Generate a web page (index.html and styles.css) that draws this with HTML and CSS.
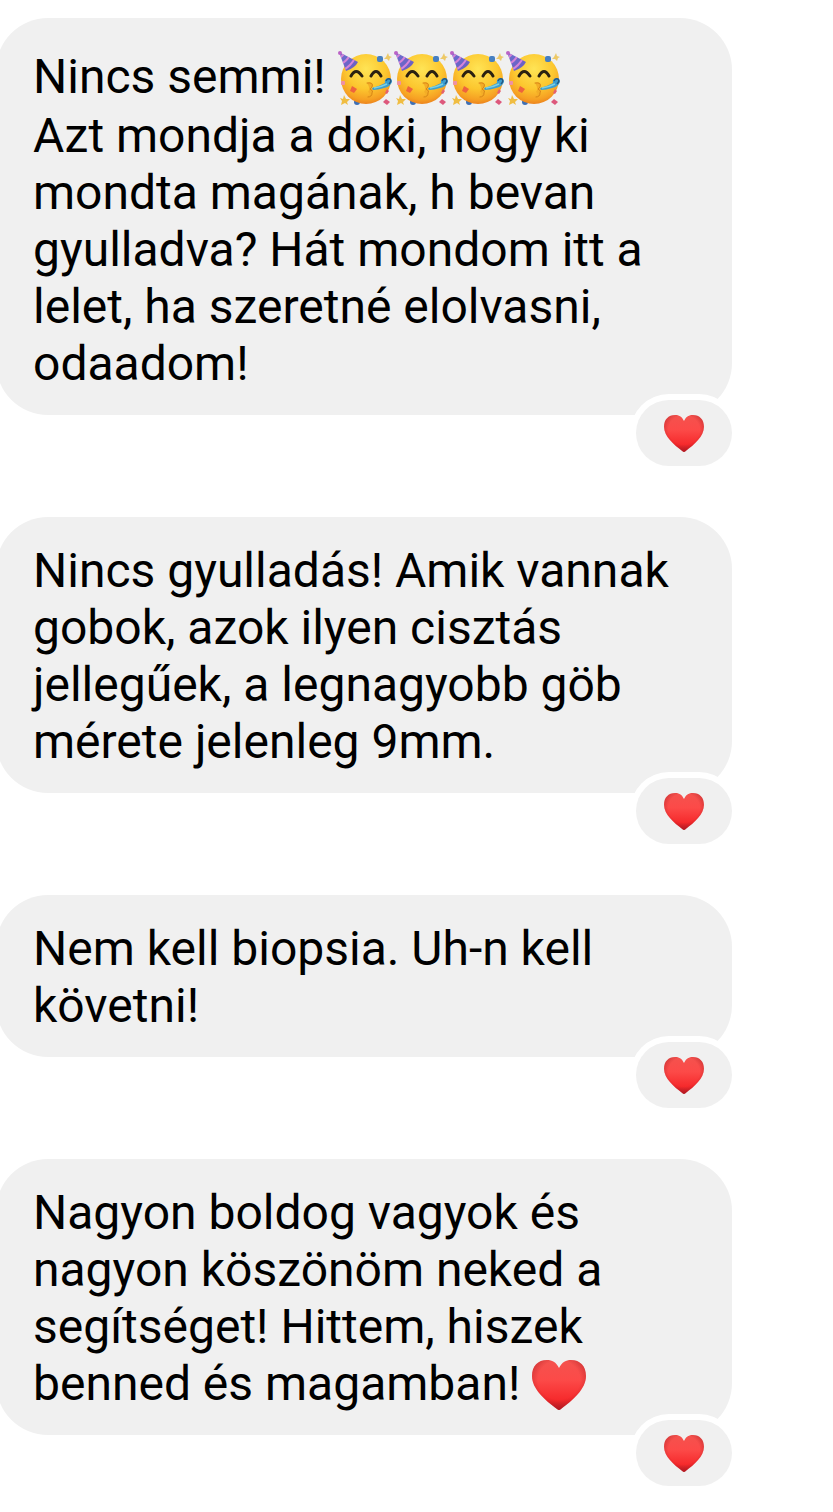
FILE: index.html
```html
<!DOCTYPE html>
<html lang="hu">

<head>
    <meta charset="UTF-8">
    <meta name="viewport" content="width=device-width, initial-scale=1.0">
    <title>Chat</title>
    <link rel="stylesheet" href="styles.css">
</head>

<body>
    <!-- Shared emoji drawings -->
    <svg class="sprite" aria-hidden="true">
        <defs>
            <radialGradient id="faceFill" cx="0.5" cy="0.3" r="0.72">
                <stop offset="0" stop-color="#ffe455" />
                <stop offset="0.55" stop-color="#fcc72f" />
                <stop offset="0.85" stop-color="#f6a023" />
                <stop offset="1" stop-color="#ea7e1c" />
            </radialGradient>
            <linearGradient id="hatFill" x1="0" y1="0" x2="1" y2="1">
                <stop offset="0" stop-color="#6a6fd0" />
                <stop offset="1" stop-color="#6d5cc0" />
            </linearGradient>
            <linearGradient id="heartFill" x1="0" y1="0" x2="0" y2="1">
                <stop offset="0" stop-color="#f4524e" />
                <stop offset="0.4" stop-color="#fc4a48" />
                <stop offset="0.8" stop-color="#f62a2c" />
                <stop offset="1" stop-color="#c0202a" />
            </linearGradient>
            <radialGradient id="heartShade" cx="0.5" cy="0.4" r="0.6">
                <stop offset="0.65" stop-color="#a01018" stop-opacity="0" />
                <stop offset="1" stop-color="#a01018" stop-opacity="0.5" />
            </radialGradient>
            <clipPath id="hatClip">
                <path d="M1 9 L20 19 Q17 25 8 28 Z" />
            </clipPath>
        </defs>
        <symbol id="heart" viewBox="0 0 54 50">
            <path fill="url(#heartFill)" d="M27 8 C30 2 34 0 39 0 C48 0 54 6 54 16 C54 29 41 40 29 49 Q27 51 25 49 C13 40 0 29 0 16 C0 6 6 0 15 0 C20 0 24 2 27 8 Z" />
            <path fill="url(#heartShade)" d="M27 8 C30 2 34 0 39 0 C48 0 54 6 54 16 C54 29 41 40 29 49 Q27 51 25 49 C13 40 0 29 0 16 C0 6 6 0 15 0 C20 0 24 2 27 8 Z" />
        </symbol>
        <symbol id="party" viewBox="0 0 56 64">
            <circle cx="19" cy="59" r="3" fill="#3d6fb5" />
            <circle cx="28" cy="36" r="25" fill="url(#faceFill)" />
            <!-- hat -->
            <path fill="url(#hatFill)" d="M1 9 L20 19 Q17 25 8 28 Z" />
            <g clip-path="url(#hatClip)" fill="none" stroke="#d584d8" stroke-width="2">
                <path d="M2 15 L8 9" />
                <path d="M3 21 Q9 18 12 12" />
                <path d="M5 27 Q13 23 17 15" />
            </g>
            <circle cx="2" cy="10" r="2" fill="#bb62c6" />
            <!-- eyes -->
            <path fill="none" stroke="#2b2111" stroke-width="3" stroke-linecap="round" d="M13 33 Q18 24 24 33 M33 33 Q38 24 43 33" />
            <!-- lips -->
            <path fill="#f3ad27" d="M29 40 Q34 38 35 42 Q35 44 33 45 Q37 47 34 49 Q36 54 30 54 Q33 51 30 49 Q33 46 29 40 Z" />
            <path fill="none" stroke="#d88517" stroke-width="1" stroke-linecap="round" d="M29 40 Q36 39 34 44 L32 46 Q36 48 34 50 Q34 54 30 54" />
            <!-- blower -->
            <path fill="#3c9fd0" d="M34 45 Q42 43 47 40 Q46 36 50 35 Q54 35 54 39 Q52 44 46 45 Q40 47 35 47 Z" />
            <path fill="none" stroke="#7ed0e2" stroke-width="1.4" d="M36 45 Q43 44 49 41" />
            <path fill="none" stroke="#255783" stroke-width="1.4" d="M48 38 Q49 35 52 36 Q54 38 51 41" />
            <!-- confetti -->
            <rect x="39" y="13" width="6" height="6" rx="2" fill="#467fc2" />
            <path fill="#edc967" d="M50 10 L51 13 L54 14 L52 15 L51 18 L49 16 L46 16 L48 14 Z" />
            <rect x="3" y="38" width="4" height="4" rx="1" fill="#ee91a4" />
            <path fill="#ee633d" d="M14 43 L19 46 L16 50 L12 48 Z" />
            <path fill="#e5616a" d="M49 46 L51 48 L49 51 L47 50 Z" />
            <path fill="#f0bd42" d="M6 52 L8 56 L12 56 L9 59 L10 62 L7 60 L3 62 L4 58 L2 55 L5 56 Z" />
            <path fill="#dd587c" d="M48 56 L52 59 L49 62 L45 59 Z" />
        </symbol>
    </svg>

    <main class="chat">
        <div class="message">
            <p class="text">Nincs semmi! <svg class="party" role="img" aria-label="party"><use href="#party" /></svg><svg class="party" role="img" aria-label="party"><use href="#party" /></svg><svg class="party" role="img" aria-label="party"><use href="#party" /></svg><svg class="party" role="img" aria-label="party"><use href="#party" /></svg><br>
                Azt mondja a doki, hogy ki mondta magának, h bevan gyulladva? Hát mondom itt a lelet, ha szeretné elolvasni, odaadom!</p>
            <button class="reaction" type="button" aria-label="heart"><svg class="reaction-heart"><use href="#heart" /></svg></button>
        </div>
        <div class="message">
            <p class="text">Nincs gyulladás! Amik vannak gobok, azok ilyen cisztás jellegűek, a legnagyobb göb mérete jelenleg 9mm.</p>
            <button class="reaction" type="button" aria-label="heart"><svg class="reaction-heart"><use href="#heart" /></svg></button>
        </div>
        <div class="message">
            <p class="text">Nem kell biopsia. Uh-n kell követni!</p>
            <button class="reaction" type="button" aria-label="heart"><svg class="reaction-heart"><use href="#heart" /></svg></button>
        </div>
        <div class="message">
            <p class="text">Nagyon boldog vagyok és nagyon köszönöm neked a segítséget! Hittem, hiszek benned és magamban! <svg class="heart" role="img" aria-label="heart"><use href="#heart" /></svg></p>
            <button class="reaction" type="button" aria-label="heart"><svg class="reaction-heart"><use href="#heart" /></svg></button>
        </div>
    </main>
</body>

</html>
```
FILE: styles.css
```css
body {
    font-family: Roboto, sans-serif;
    margin: 0;
    background-color: #fff;
    color: #000;
}

.sprite {
    position: absolute;
    width: 0;
    height: 0;
}

.chat {
    display: flex;
    flex-direction: column;
    gap: 102px;
    padding: 18px 101px 77px 0;
}

.message {
    position: relative;
    /* Bubble runs slightly past the left edge */
    margin-left: -4px;
    padding: 25px 34px 23px 37px;
    border-radius: 52px;
    background-color: #f0f0f0;
}

.text {
    margin: 0;
    font-size: 48px;
    line-height: 57px;
}

.party {
    width: 56px;
    height: 64px;
    vertical-align: -14px;
}

.heart {
    width: 54px;
    height: 50px;
    vertical-align: -10px;
}

/* Reaction hangs over the bottom corner of the bubble */
.reaction {
    position: absolute;
    right: 0;
    bottom: -51px;
    display: flex;
    justify-content: center;
    align-items: center;
    width: 96px;
    height: 66px;
    padding: 0;
    border: none;
    border-radius: 33px;
    background-color: #f0f0f0;
    box-shadow: 0 0 0 6px #fff;
    cursor: pointer;
}

.reaction-heart {
    width: 40px;
    height: 37px;
}
```
